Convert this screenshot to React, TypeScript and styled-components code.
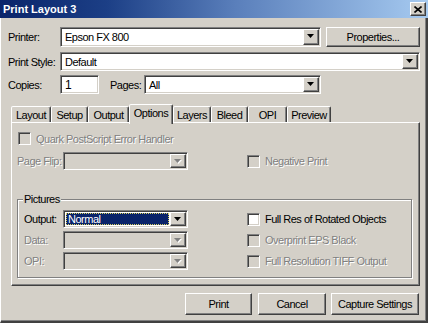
import styled, { createGlobalStyle, css } from 'styled-components';

const GlobalStyle = createGlobalStyle`
	html, body {
		margin: 0;
		padding: 0;
		background: #d4d0c8;
	}
	body {
		font-family: "Liberation Sans", Arial, sans-serif;
		font-size: 11px;
		letter-spacing: -0.5px;
		color: #000;
	}
	* {
		box-sizing: border-box;
	}
`;

const raised = css`
	border: 1px solid;
	border-color: #fff #404040 #404040 #fff;
	box-shadow: inset -1px -1px #808080;
	background: #d4d0c8;
`;

const sunken = css`
	border: 1px solid;
	border-color: #808080 #fff #fff #808080;
	box-shadow: inset 1px 1px #404040, inset -1px -1px #d4d0c8;
	padding: 1px;
`;

const Window = styled.div`
	width: 428px;
	height: 323px;
	display: flex;
	flex-direction: column;
	background: #d4d0c8;
	overflow: hidden;
`;

const TitleBar = styled.div`
	height: 18px;
	flex: none;
	display: flex;
	align-items: center;
	justify-content: space-between;
	padding: 0 2px 0 3px;
	background: linear-gradient(to right, #0a246a 0%, #1c3f86 25%, #5a7fbb 55%, #a6caf0 100%);
	color: #fff;
	font-weight: bold;
	font-size: 11px;
	letter-spacing: 0;
`;

const CloseButton = styled.div`
	${raised};
	width: 16px;
	height: 14px;
	display: flex;
	align-items: center;
	justify-content: center;
`;

const Body = styled.div`
	flex: 1;
	display: flex;
	flex-direction: column;
	border-style: solid;
	border-width: 0 2px 2px 1px;
	border-color: transparent #404040 #404040 #fff;
	box-shadow: inset -1px -1px #808080;
	padding: 8px 6px 0 7px;
`;

const Row = styled.div<{ $h: number; $mt?: number }>`
	display: flex;
	align-items: center;
	height: ${(p) => p.$h}px;
	margin-top: ${(p) => p.$mt ?? 0}px;
`;

const Label = styled.span<{ $w?: number; $ml?: number; $disabled?: boolean }>`
	width: ${(p) => (p.$w ? `${p.$w}px` : 'auto')};
	margin-left: ${(p) => p.$ml ?? 0}px;
	flex: none;
	white-space: nowrap;
	${(p) =>
		p.$disabled &&
		css`
			color: #808080;
			text-shadow: 1px 1px 0 #fff;
		`}
`;

const Field = styled.div<{ $w?: number; $h: number; $disabled?: boolean }>`
	${sunken};
	width: ${(p) => (p.$w ? `${p.$w}px` : 'auto')};
	flex: ${(p) => (p.$w ? 'none' : '1')};
	height: ${(p) => p.$h}px;
	background: ${(p) => (p.$disabled ? '#d4d0c8' : '#fff')};
	display: flex;
	align-items: stretch;
`;

const FieldValue = styled.div<{ $selected?: boolean; $size?: number }>`
	flex: 1;
	display: flex;
	align-items: center;
	padding-left: 3px;
	font-size: ${(p) => p.$size ?? 11}px;
	white-space: nowrap;
	overflow: hidden;
	${(p) =>
		p.$selected &&
		css`
			margin: 1px;
			padding-left: 2px;
			background: #0a246a;
			color: #fff;
			outline: 1px dotted #d8d060;
			outline-offset: -1px;
		`}
`;

const DropButton = styled.div`
	${raised};
	width: 16px;
	flex: none;
	display: flex;
	align-items: center;
	justify-content: center;
`;

const Button = styled.div<{ $w: number; $h: number; $ml?: number }>`
	${raised};
	width: ${(p) => p.$w}px;
	height: ${(p) => p.$h}px;
	margin-left: ${(p) => p.$ml ?? 0}px;
	flex: none;
	display: flex;
	align-items: center;
	justify-content: center;
	white-space: nowrap;
`;

const TabStrip = styled.div`
	display: flex;
	align-items: flex-end;
	height: 18px;
	margin: 10px 0 0 3px;
`;

const Tab = styled.div<{ $w: number; $active?: boolean }>`
	position: relative;
	width: ${(p) => p.$w}px;
	height: ${(p) => (p.$active ? 20 : 16)}px;
	margin-bottom: ${(p) => (p.$active ? -2 : 0)}px;
	z-index: ${(p) => (p.$active ? 1 : 0)};
	flex: none;
	display: flex;
	align-items: ${(p) => (p.$active ? 'flex-start' : 'center')};
	padding-top: ${(p) => (p.$active ? 2 : 0)}px;
	justify-content: center;
	background: #d4d0c8;
	border-style: solid;
	border-width: 1px 1px 0 1px;
	border-color: #fff #404040 transparent #fff;
	border-radius: 2px 2px 0 0;
	box-shadow: inset -1px 0 #808080;
	white-space: nowrap;
`;

const Panel = styled.div`
	margin-left: 3px;
	height: 164px;
	border: 1px solid;
	border-color: #fff #404040 #404040 #fff;
	box-shadow: inset -1px -1px #808080;
	padding: 9px 7px 0 5px;
	display: flex;
	flex-direction: column;
`;

const CheckRow = styled.div<{ $ml?: number }>`
	display: flex;
	align-items: center;
	gap: 5px;
	margin-left: ${(p) => p.$ml ?? 0}px;
	white-space: nowrap;
`;

const CheckBox = styled.div<{ $disabled?: boolean }>`
	${sunken};
	width: 13px;
	height: 13px;
	flex: none;
	background: ${(p) => (p.$disabled ? '#d4d0c8' : '#fff')};
`;

const GroupBox = styled.div`
	position: relative;
	margin-top: 29px;
	height: 79px;
	border: 1px solid #808080;
	box-shadow: inset 1px 1px #fff, 1px 1px #fff;
	padding: 10px 6px 0 6px;
`;

const Legend = styled.span`
	position: absolute;
	top: -7px;
	left: 5px;
	padding: 0 1px;
	background: #d4d0c8;
	line-height: 13px;
`;

const GroupGrid = styled.div`
	display: grid;
	grid-template-columns: 164px auto;
	grid-auto-rows: 18px;
	column-gap: 59px;
	row-gap: 3px;
	align-items: center;
`;

const ButtonRow = styled.div`
	display: flex;
	justify-content: flex-end;
	margin-top: 7px;
	padding-right: 1px;
`;

const Arrow = ({ disabled }: { disabled?: boolean }) => (
	<svg width="8" height="5" viewBox="0 0 8 5">
		{disabled && <path d="M1 1h7L4.5 5z" fill="#fff" />}
		<path d="M0 0h7L3.5 4z" fill={disabled ? '#808080' : '#000'} />
	</svg>
);

const Select = ({
	w,
	h,
	value,
	disabled,
	selected,
}: {
	w?: number;
	h: number;
	value?: string;
	disabled?: boolean;
	selected?: boolean;
}) => (
	<Field $w={w} $h={h} $disabled={disabled}>
		<FieldValue $selected={selected}>{value}</FieldValue>
		<DropButton>
			<Arrow disabled={disabled} />
		</DropButton>
	</Field>
);

const Check = ({ label, disabled, ml }: { label: string; disabled?: boolean; ml?: number }) => (
	<CheckRow $ml={ml}>
		<CheckBox $disabled={disabled} />
		<Label $disabled={disabled}>{label}</Label>
	</CheckRow>
);

const tabs = [
	{ name: 'Layout', w: 40 },
	{ name: 'Setup', w: 37 },
	{ name: 'Output', w: 41 },
	{ name: 'Options', w: 44, active: true },
	{ name: 'Layers', w: 38 },
	{ name: 'Bleed', w: 37 },
	{ name: 'OPI', w: 39 },
	{ name: 'Preview', w: 44 },
];

const App = () => {
	return (
		<>
			<GlobalStyle />
			<Window>
				<TitleBar>
					<span>Print Layout 3</span>
					<CloseButton>
						<svg width="8" height="7" viewBox="0 0 8 7">
							<path d="M0.5 0.5L7.5 6.5M7.5 0.5L0.5 6.5" stroke="#000" strokeWidth="1.6" />
						</svg>
					</CloseButton>
				</TitleBar>
				<Body>
					<Row $h={21}>
						<Label $w={52}>Printer:</Label>
						<Select w={261} h={20} value="Epson FX 800" />
						<Button $w={94} $h={20} $ml={5}>
							Properties...
						</Button>
					</Row>
					<Row $h={19} $mt={5}>
						<Label $w={52}>Print Style:</Label>
						<Select h={19} value="Default" />
					</Row>
					<Row $h={19} $mt={4}>
						<Label $w={52}>Copies:</Label>
						<Field $w={39} $h={19}>
							<FieldValue $size={12}>1</FieldValue>
						</Field>
						<Label $w={34} $ml={11}>
							Pages:
						</Label>
						<Select w={177} h={19} value="All" />
					</Row>

					<TabStrip>
						{tabs.map((t) => (
							<Tab key={t.name} $w={t.w} $active={t.active}>
								{t.name}
							</Tab>
						))}
					</TabStrip>
					<Panel>
						<Check label="Quark PostScript Error Handler" disabled ml={1} />
						<Row $h={18} $mt={7}>
							<Label $w={46} $disabled>
								Page Flip:
							</Label>
							<Select w={125} h={18} disabled />
							<Check label="Negative Print" disabled ml={59} />
						</Row>
						<GroupBox>
							<Legend>Pictures</Legend>
							<GroupGrid>
								<Row $h={18}>
									<Label $w={39}>Output:</Label>
									<Select w={125} h={18} value="Normal" selected />
								</Row>
								<Check label="Full Res of Rotated Objects" />
								<Row $h={18}>
									<Label $w={39} $disabled>
										Data:
									</Label>
									<Select w={125} h={18} disabled />
								</Row>
								<Check label="Overprint EPS Black" disabled />
								<Row $h={18}>
									<Label $w={39} $disabled>
										OPI:
									</Label>
									<Select w={125} h={18} disabled />
								</Row>
								<Check label="Full Resolution TIFF Output" disabled />
							</GroupGrid>
						</GroupBox>
					</Panel>
					<ButtonRow>
						<Button $w={67} $h={22}>
							Print
						</Button>
						<Button $w={68} $h={22} $ml={6}>
							Cancel
						</Button>
						<Button $w={88} $h={22} $ml={5}>
							Capture Settings
						</Button>
					</ButtonRow>
				</Body>
			</Window>
		</>
	);
};

export default App;
